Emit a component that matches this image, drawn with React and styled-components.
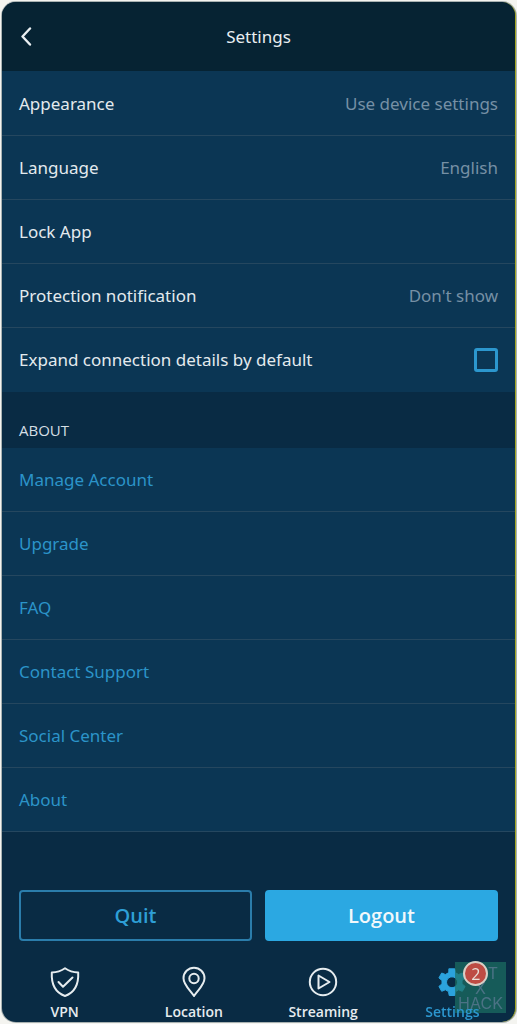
import React from "react";
import styled, { createGlobalStyle, css } from "styled-components";

const GlobalStyle = createGlobalStyle`
  * { box-sizing: border-box; }
  body {
    margin: 0;
    background: #f4f4f0;
    font-family: "Open Sans", "Noto Sans", sans-serif;
  }
  button { font-family: inherit; cursor: pointer; }
`;

const Screen = styled.div`
  display: flex;
  flex-direction: column;
  min-height: calc(100vh - 4px);
  margin: 2px 1px 2px 2px;
  overflow: hidden;
  border-right: 1px solid #a4a622;
  border-radius: 14px;
  background: #092b44;
  box-shadow: 0 0 0 1px #a9b2b2;
`;

const Header = styled.header`
  display: grid;
  grid-template-columns: 48px 1fr 48px;
  align-items: center;
  height: 69px;
  background: #062333;
`;

const BackButton = styled.button`
  display: flex;
  align-items: center;
  height: 48px;
  padding: 0 0 0 16px;
  border: 0;
  background: transparent;
  color: #e9eef1;
`;

const Title = styled.h1`
  margin: 0;
  color: #e9eef1;
  font-family: "Noto Sans", "Open Sans", sans-serif;
  font-size: 17px;
  font-weight: 400;
  line-height: 24px;
  text-align: center;
`;

const List = styled.ul`
  margin: 0;
  padding: 0;
  list-style: none;
  background: #0b3654;

  &:first-child { padding-top: 1px; }
`;

const Item = styled.li`
  height: 64px;
  border-bottom: ${({ $last }) => ($last ? "0" : "1px solid #25475f")};
`;

const rowStyle = css`
  display: flex;
  align-items: center;
  justify-content: space-between;
  width: 100%;
  height: 100%;
  padding: 0 17px;
  border: 0;
  background: transparent;
  font-family: "Noto Sans", "Open Sans", sans-serif;
  font-size: 17px;
  line-height: 24px;
  text-align: left;
`;

const RowButton = styled.button`
  ${rowStyle}
  color: #e3eaee;
`;

const RowLabel = styled.label`
  ${rowStyle}
  color: #e3eaee;
`;

const RowLink = styled.a`
  ${rowStyle}
  color: #2b94c9;
  text-decoration: none;
`;

const Value = styled.span`
  color: #7690a5;
`;

const Checkbox = styled.input`
  appearance: none;
  width: 24px;
  height: 24px;
  margin: 0;
  border: 3px solid #2c97ce;
  border-radius: 3px;
  background: transparent;

  &:checked { background: #2c97ce; }
`;

const SectionTitle = styled.h2`
  display: flex;
  align-items: flex-end;
  height: 56px;
  margin: 0;
  padding: 0 17px 8px;
  color: #d5dfe5;
  font-size: 15px;
  font-weight: 400;
  line-height: 20px;
`;

const Actions = styled.div`
  display: grid;
  grid-template-columns: 1fr 1fr;
  gap: 13px;
  margin-top: auto;
  padding: 56px 17px 0;
`;

const ActionButton = styled.button`
  height: 51px;
  border: 2px solid ${({ $primary }) => ($primary ? "#2ba8e2" : "#2b7dab")};
  border-radius: 4px;
  background: ${({ $primary }) => ($primary ? "#2ba8e2" : "transparent")};
  color: ${({ $primary }) => ($primary ? "#f2f8fb" : "#2e9fd6")};
  font-size: 20px;
  font-weight: 600;
  line-height: 28px;
`;

const TabBar = styled.nav`
  display: grid;
  grid-template-columns: repeat(4, 1fr);
  margin: 25px -2px 0;
`;

const Tab = styled.a`
  display: flex;
  flex-direction: column;
  align-items: center;
  gap: 4px;
  color: ${({ $active }) => ($active ? "#2c97cf" : "#e6ecef")};
  font-size: 14px;
  font-weight: 600;
  line-height: 20px;
  text-decoration: none;
`;

const TabLabel = styled.span`
  position: relative;
  z-index: 2;
`;

const IconSlot = styled.span`
  position: relative;
  display: flex;
  height: 32px;
  align-items: center;
`;

const Badge = styled.span`
  position: absolute;
  z-index: 2;
  top: -5px;
  left: 27px;
  display: flex;
  align-items: center;
  justify-content: center;
  width: 25px;
  height: 25px;
  border: 2px solid #d9cfc6;
  border-radius: 50%;
  background: #bd4c44;
  color: #eadfd8;
  font-size: 16px;
  font-weight: 400;
  line-height: 20px;
`;

const Stamp = styled.div`
  position: fixed;
  z-index: 1;
  right: 11px;
  bottom: 11px;
  display: flex;
  flex-direction: column;
  align-items: center;
  width: 51px;
  height: 51px;
  padding-top: 4px;
  background: rgba(28, 112, 98, 0.7);
  color: #4b7285;
  font-family: Inter, sans-serif;
  font-size: 16px;
  line-height: 15px;
  pointer-events: none;
`;

const StampTop = styled.span`
  align-self: flex-end;
  padding-right: 8px;
`;

const iconProps = {
  width: 32,
  height: 32,
  viewBox: "0 0 32 32",
  fill: "none",
  stroke: "currentColor",
  strokeWidth: 2,
  strokeLinejoin: "round",
  strokeLinecap: "round",
  "aria-hidden": true,
};

const ShieldIcon = () => (
  <svg {...iconProps}>
    <path d="M16 2.2C12 5 7 6.3 2.8 6.5C2.3 16.5 4.8 26 16 30C27.2 26 29.7 16.5 29.2 6.5C25 6.3 20 5 16 2.2Z" />
    <path d="M9.5 16L14 20.8L23.5 11.5" />
  </svg>
);

const PinIcon = () => (
  <svg {...iconProps}>
    <path d="M16 30C13 25 5.5 19 5.5 12.2A10.5 10.5 0 0 1 26.5 12.2C26.5 19 19 25 16 30Z" />
    <circle cx="16" cy="12.5" r="4.7" />
  </svg>
);

const PlayIcon = () => (
  <svg {...iconProps}>
    <circle cx="16" cy="16" r="13.2" />
    <path d="M11.5 9.5V22.5L22.5 16Z" />
  </svg>
);

const GearIcon = () => (
  <svg {...iconProps} fill="#2ba3dd" stroke="#2ba3dd" strokeWidth="1">
    <path
      fillRule="evenodd"
      d="M13.2 2.8H18.8L19.5 6.8L22.6 8.5L26.3 7L29.1 11.9L26 14.5V17.9L29.1 20.4L26.3 25.3L22.6 23.8L19.5 25.6L18.8 29.5H13.2L12.5 25.6L9.4 23.8L5.7 25.3L2.9 20.4L6 17.9V14.5L2.9 11.9L5.7 7L9.4 8.5L12.5 6.8ZM16 10.7A5.5 5.5 0 1 0 16 21.7A5.5 5.5 0 1 0 16 10.7Z"
    />
  </svg>
);

const preferences = [
  { label: "Appearance", value: "Use device settings" },
  { label: "Language", value: "English" },
  { label: "Lock App" },
  { label: "Protection notification", value: "Don't show" },
];

const aboutLinks = [
  "Manage Account",
  "Upgrade",
  "FAQ",
  "Contact Support",
  "Social Center",
  "About",
];

const tabs = [
  { label: "VPN", Icon: ShieldIcon },
  { label: "Location", Icon: PinIcon },
  { label: "Streaming", Icon: PlayIcon },
  { label: "Settings", Icon: GearIcon, active: true, badge: 2 },
];

export default function App() {
  return (
    <>
      <GlobalStyle />
      <Screen>
        <Header>
          <BackButton type="button" aria-label="Back">
            <svg width="16" height="20" viewBox="0 0 16 20" fill="none" stroke="currentColor" strokeWidth="2.4" strokeLinecap="round" strokeLinejoin="round" aria-hidden="true">
              <path d="M12 1.5L4.5 9.5L12 17.5" />
            </svg>
          </BackButton>
          <Title>Settings</Title>
        </Header>
        <main>
          <List>
            {preferences.map(({ label, value }) => (
              <Item key={label}>
                <RowButton type="button">
                  <span>{label}</span>
                  {value && <Value>{value}</Value>}
                </RowButton>
              </Item>
            ))}
            <Item $last>
              <RowLabel htmlFor="expand-details">
                <span>Expand connection details by default</span>
                <Checkbox id="expand-details" type="checkbox" />
              </RowLabel>
            </Item>
          </List>
          <SectionTitle>ABOUT</SectionTitle>
          <List>
            {aboutLinks.map((label) => (
              <Item key={label}>
                <RowLink href="#">{label}</RowLink>
              </Item>
            ))}
          </List>
        </main>
        <Actions>
          <ActionButton type="button">Quit</ActionButton>
          <ActionButton type="button" $primary>Logout</ActionButton>
        </Actions>
        <TabBar>
          {tabs.map(({ label, Icon, active, badge }) => (
            <Tab key={label} href="#" $active={active} aria-current={active ? "page" : undefined}>
              <IconSlot>
                <Icon />
                {badge && <Badge>{badge}</Badge>}
              </IconSlot>
              <TabLabel>{label}</TabLabel>
            </Tab>
          ))}
        </TabBar>
      </Screen>
      <Stamp>
        <StampTop>T</StampTop>
        <span>X</span>
        <span>HACK</span>
      </Stamp>
    </>
  );
}
